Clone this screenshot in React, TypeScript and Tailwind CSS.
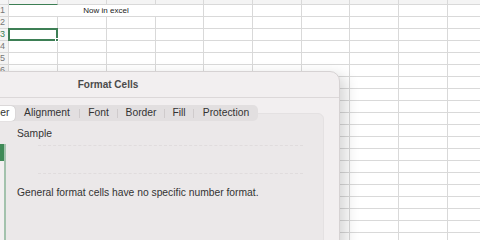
import React from "react";

const colW = [49, 49, 49, 48, 49, 49, 48, 49, 49, 49];
const rows = Array.from({ length: 20 }, (_, i) => i + 1);

export default function App() {
  return (
    <div
      className="relative w-[480px] h-[240px] overflow-hidden bg-white"
      style={{ fontFamily: '"Liberation Sans", Arial, sans-serif' }}
    >
      {/* spreadsheet */}
      <div className="flex flex-col">
        <div className="flex h-[5px] bg-[#f4f4f4]">
          <div className="w-[9px] shrink-0 border-r border-b border-[#d9d9d9]" />
          {colW.map((w, i) => (
            <div
              key={i}
              style={{ width: w }}
              className={
                i === 0
                  ? "shrink-0 border-r border-b border-r-[#d9d9d9] border-b-[#3d7f55]"
                  : "shrink-0 border-r border-b border-[#d9d9d9]"
              }
            />
          ))}
        </div>
        {rows.map((r) => (
          <div key={r} className="flex h-[12px]">
            <div
              className={
                r === 3
                  ? "w-[9px] shrink-0 border-r border-b border-[#d9d9d9] bg-[#f4f4f4] text-[9px] leading-[11px] text-right pr-[3px] text-[#3d7f55] overflow-hidden"
                  : "w-[9px] shrink-0 border-r border-b border-[#d9d9d9] bg-[#f4f4f4] text-[9px] leading-[11px] text-right pr-[3px] text-[#777] overflow-hidden"
              }
            >
              {r}
            </div>
            {r === 1 ? (
              <>
                <div className="w-[195px] shrink-0 border-r border-b border-[#d9d9d9] text-[8px] leading-[11px] text-center text-[#222]">
                  Now in excel
                </div>
                {colW.slice(4).map((w, i) => (
                  <div
                    key={i}
                    style={{ width: w }}
                    className="shrink-0 border-r border-b border-[#d9d9d9]"
                  />
                ))}
              </>
            ) : (
              colW.map((w, i) => (
                <div
                  key={i}
                  style={{ width: w }}
                  className="shrink-0 border-r border-b border-[#d9d9d9]"
                />
              ))
            )}
          </div>
        ))}
      </div>

      {/* selected cell */}
      <div className="absolute left-[8px] top-[28px] w-[50px] h-[13px] border-2 border-[#3d7f55]" />
      <div className="absolute left-[55px] top-[38px] w-[4px] h-[4px] bg-[#3d7f55] border border-white" />

      {/* dialog */}
      <div className="absolute left-[-124px] top-[71px] w-[464px] h-[200px] rounded-[10px] bg-[#f2eff0] border border-[#d6d2d3] shadow-[6px_4px_14px_rgba(0,0,0,0.16)]">
        <div className="h-[26px] border-b border-[#dcd8d9] flex items-center justify-center text-[10px] font-bold text-[#4a4a4a]">
          Format Cells
        </div>
        <div className="px-[15px] pt-[7px]">
          <div className="relative z-10 ml-[75px] flex h-[16px] w-[291px] rounded-[5px] bg-[#e2dfe0] text-[10.3px] text-[#333] items-center">
            <div className="w-[48px] h-[15px] rounded-[4px] bg-white shadow-[0_0_1px_rgba(0,0,0,0.3)] flex items-center justify-center">
              Number
            </div>
            <div className="w-[64px] flex items-center justify-center">Alignment</div>
            <div className="w-px h-[9px] bg-[#cfcbcc]" />
            <div className="w-[37px] flex items-center justify-center">Font</div>
            <div className="w-px h-[9px] bg-[#cfcbcc]" />
            <div className="w-[46px] flex items-center justify-center">Border</div>
            <div className="w-px h-[9px] bg-[#cfcbcc]" />
            <div className="w-[28px] flex items-center justify-center">Fill</div>
            <div className="w-px h-[9px] bg-[#cfcbcc]" />
            <div className="w-[64px] flex items-center justify-center">Protection</div>
          </div>
          <div className="-mt-[8px] h-[160px] rounded-[6px] bg-[#ebe8e9] border border-[#e4e1e2] flex pl-[10px]">
            <div className="mt-[30px] w-[103px] h-[120px] border-r-2 border-[#a3c2ad] bg-[#f2f0f1]">
              <div className="h-[17px] bg-[#3f8a57]" />
            </div>
            <div className="ml-[11px] pt-[14px] flex flex-col">
              <div className="text-[10.3px] leading-[12px] text-[#333]">Sample</div>
              <div className="ml-[21px] mt-[5px] w-[265px] h-[29px] border-t border-b border-dashed border-[#e0dcdd]" />
              <div className="mt-[13px] text-[10.3px] leading-[12px] text-[#333] whitespace-nowrap">
                General format cells have no specific number format.
              </div>
            </div>
          </div>
        </div>
      </div>
    </div>
  );
}
